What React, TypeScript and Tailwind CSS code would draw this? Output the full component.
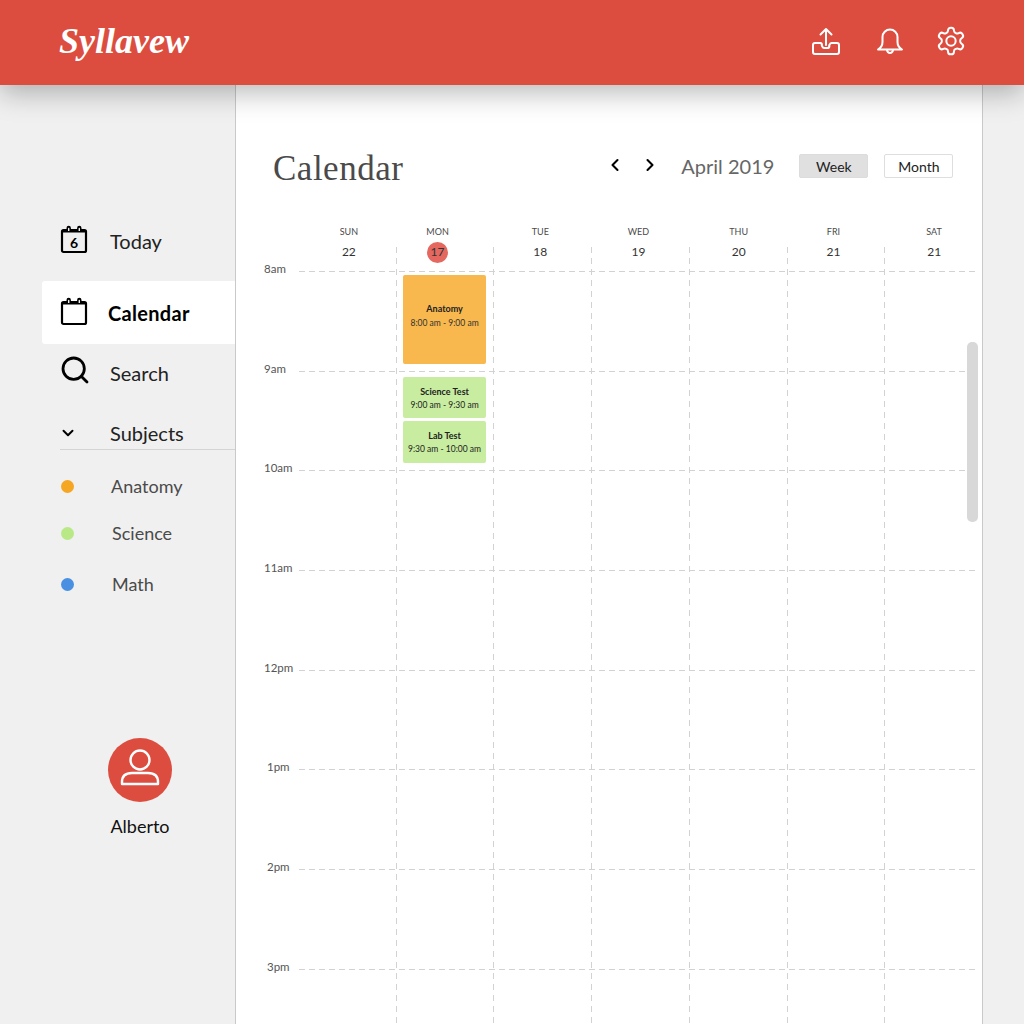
import React from 'react';
import { ChevronDown, ChevronLeft, ChevronRight, Search } from 'lucide-react';

const days = [
  { name: 'SUN', date: '22', cls: 'pl-[4px]' },
  { name: 'MON', date: '17', cls: 'pr-[14px]' },
  { name: 'TUE', date: '18', cls: 'pr-[4px]' },
  { name: 'WED', date: '19', cls: 'pr-[3px]' },
  { name: 'THU', date: '20', cls: 'pl-[2px]' },
  { name: 'FRI', date: '21', cls: 'pr-[4px]' },
  { name: 'SAT', date: '21', cls: 'pl-[2px]' },
];

const hours = [
  { label: '8am', cls: 'pl-[28px]' },
  { label: '9am', cls: 'pl-[28px]' },
  { label: '10am', cls: 'pl-[28px]' },
  { label: '11am', cls: 'pl-[28px]' },
  { label: '12pm', cls: 'pl-[28px]' },
  { label: '1pm', cls: 'pl-[31px]' },
  { label: '2pm', cls: 'pl-[31px]' },
  { label: '3pm', cls: 'pl-[31px]' },
];

const subjects = [
  { name: 'Anatomy', dot: 'bg-[#f5a623]', cls: 'h-[47px] pl-[44px]' },
  { name: 'Science', dot: 'bg-[#b8e986]', cls: 'h-[47px] pl-[45px]' },
  { name: 'Math', dot: 'bg-[#4a90e2]', cls: 'h-[55px] pl-[45px]' },
];

const CalendarIcon: React.FC<{ day?: string; className?: string }> = ({ day, className }) => (
  <svg width="28" height="30" viewBox="0 0 28 30" fill="none" className={className}>
    <rect x="2" y="6" width="24" height="22" rx="1.5" stroke="#000" strokeWidth="2.2" />
    <path d="M2 6h24v2.500H2Z" fill="#000" />
    <path d="M6.500 7V4a2.200 2.200 0 0 1 4.400 0v3ZM17.100 7V4a2.200 2.200 0 0 1 4.400 0v3Z" fill="#000" />
    <path d="M8 7V4.500a.7.7 0 0 1 1.400 0V7ZM18.600 7V4.500a.7.7 0 0 1 1.400 0V7Z" fill="#f0f0f0" />
    {day && (
      <text x="14" y="23.5" textAnchor="middle" fontSize="14" fontWeight="700" fill="#000" fontFamily="Lato, sans-serif">
        {day}
      </text>
    )}
  </svg>
);

const UploadIcon = () => (
  <svg width="30" height="30" viewBox="0 0 30 30" fill="none" stroke="#fff" strokeWidth="2" strokeLinecap="round" strokeLinejoin="round">
    <path d="M15 19V3M9.500 8.500 15 3l5.500 5.500" />
    <path d="M9.500 17H4a2 2 0 0 0-2 2v7a2 2 0 0 0 2 2h22a2 2 0 0 0 2-2v-7a2 2 0 0 0-2-2h-5.500a2 2 0 0 0-1.800 1.500l-.5 1A2 2 0 0 1 17 22h-4a2 2 0 0 1-1.700-1.500l-.5-1A2 2 0 0 0 9.500 17Z" />
  </svg>
);

const BellIcon = () => (
  <svg width="28" height="28" viewBox="0 0 28 28" fill="none" stroke="#fff" strokeWidth="2" strokeLinecap="round" strokeLinejoin="round">
    <path d="M2 22.500c2.500-1.500 4.500-3.500 4.500-7.500V10a7.500 7.500 0 0 1 15 0v5c0 4 2 6 4.500 7.500Z" />
    <path d="M11 23c.4 2 1.500 3 3 3s2.600-1 3-3" />
  </svg>
);

const GearIcon = () => (
  <svg width="32" height="32" viewBox="0 0 24 24" fill="none" stroke="#fff" strokeWidth="1.500" strokeLinecap="round" strokeLinejoin="round">
    <path d="M12.220 2h-.440a2 2 0 0 0-2 2v.180a2 2 0 0 1-1 1.730l-.430.250a2 2 0 0 1-2 0l-.150-.080a2 2 0 0 0-2.730.730l-.220.380a2 2 0 0 0 .730 2.730l.150.100a2 2 0 0 1 1 1.720v.510a2 2 0 0 1-1 1.740l-.150.090a2 2 0 0 0-.730 2.730l.220.380a2 2 0 0 0 2.730.730l.150-.080a2 2 0 0 1 2 0l.430.250a2 2 0 0 1 1 1.730V20a2 2 0 0 0 2 2h.440a2 2 0 0 0 2-2v-.180a2 2 0 0 1 1-1.730l.430-.250a2 2 0 0 1 2 0l.150.080a2 2 0 0 0 2.730-.730l.220-.390a2 2 0 0 0-.730-2.730l-.150-.080a2 2 0 0 1-1-1.740v-.500a2 2 0 0 1 1-1.740l.150-.090a2 2 0 0 0 .730-2.730l-.220-.380a2 2 0 0 0-2.730-.730l-.150.080a2 2 0 0 1-2 0l-.430-.250a2 2 0 0 1-1-1.730V4a2 2 0 0 0-2-2z" />
    <circle cx="12" cy="12" r="3.500" />
  </svg>
);

const PersonIcon = () => (
  <svg width="40" height="44" viewBox="0 0 40 44" fill="none" stroke="#fff" strokeWidth="2.400">
    <circle cx="20" cy="12" r="9.500" />
    <path d="M2 34c0-6 4-9 10-9h16c6 0 10 3 10 9v2H2Z" strokeLinejoin="round" />
  </svg>
);

const Sidebar = () => (
  <aside className="w-[235px] shrink-0 pt-[127px] text-[#4a4a4a]">
    <div className="h-[60px] pl-[60px] flex items-center gap-[22px] text-[20px] text-[#222]">
      <CalendarIcon day="6" className="-mt-[7px]" />
      <span className="-mt-[2px]">Today</span>
    </div>
    <div className="mt-[9px] ml-[42px] h-[63px] pl-[18px] bg-white rounded-l-[3px] flex items-center gap-[20px] text-[20px] tracking-[0.3px] font-bold text-black">
      <CalendarIcon className="-mt-[4px]" />
      <span>Calendar</span>
    </div>
    <div className="h-[60px] pl-[59px] flex items-center gap-[19px] text-[20px] text-[#222]">
      <Search size={32} color="#000" strokeWidth={2.1} className="-mt-[9px]" />
      <span className="-mt-[2px]">Search</span>
    </div>
    <div className="ml-[60px] h-[46px] pt-[12px] border-b border-[#d4d4d4] flex items-center text-[20px] text-[#222]">
      <ChevronDown size={18} color="#000" strokeWidth={2.6} className="-ml-[1px]" />
      <span className="ml-[33px]">Subjects</span>
    </div>
    <div className="ml-[60px] mt-[13px]">
      {subjects.map((s) => (
        <div key={s.name} className={`flex items-center text-[18px] relative ${s.cls}`}>
          <span className={`absolute left-[1px] w-[13px] h-[13px] rounded-full ${s.dot}`} />
          <span className="ml-[7px]">{s.name}</span>
        </div>
      ))}
    </div>
    <div className="mt-[126px] flex flex-col items-center pl-[45px]">
      <div className="w-[64px] h-[64px] rounded-full bg-[#dc4d3f] flex items-center justify-center">
        <PersonIcon />
      </div>
      <span className="mt-[11px] text-[18px] text-[#111]">Alberto</span>
    </div>
  </aside>
);

const CalendarPanel = () => (
  <main className="w-[748px] shrink-0 h-[939px] overflow-hidden bg-white border-x border-[#c9c9c9] relative">
    <div className="flex items-center h-[58px] mt-[54px] pl-[37px]">
      <h1 className="text-[35px] pt-[2px] text-[#4a4a4a] tracking-[0.5px] [font-family:'Liberation_Serif',serif]">Calendar</h1>
      <div className="ml-[202px] flex items-center gap-[15px] -mt-[7px]">
        <ChevronLeft size={20} color="#000" strokeWidth={2.5} />
        <ChevronRight size={20} color="#000" strokeWidth={2.5} />
      </div>
      <span className="ml-[21px] text-[20px] text-[#666] -mt-[4px]">April 2019</span>
      <div className="ml-[25px] flex gap-[16px] text-[14px] text-[#222] -mt-[4px]">
        <button type="button" className="w-[69px] h-[24px] bg-[#e0e0e0] border border-[#dcdcdc] rounded-[2px]">Week</button>
        <button type="button" className="w-[69px] h-[24px] bg-white border border-[#dedede] rounded-[2px]">Month</button>
      </div>
    </div>

    <div className="ml-[62px] mt-[29px] grid grid-cols-7 h-[12px]">
      {days.map((d) => (
        <div key={d.name} className={`text-center text-[9px] leading-[12px] text-[#4a4a4a] ${d.cls}`}>{d.name}</div>
      ))}
    </div>

    <div className="relative mt-[9px]">
      <div className="ml-[62px] grid grid-cols-7 h-[24px]">
        {days.map((d) => (
          <div key={d.name} className={`flex justify-center items-center text-[12px] text-[#333] -mt-[14px] ${d.cls}`}>
            {d.date === '17' ? (
              <span className="w-[21px] h-[21px] rounded-full bg-[#e4685f] flex items-center justify-center">17</span>
            ) : d.date}
          </div>
        ))}
      </div>

      {hours.map((h) => (
        <div key={h.label} className="flex h-[99.7px]">
          <div className={`w-[63px] -mt-[10px] text-[11.5px] leading-[16px] text-[#555] ${h.cls}`}>{h.label}</div>
          <div className="flex-1 mr-[4px] h-px bg-[repeating-linear-gradient(90deg,#d2d2d2_0_6px,transparent_6px_10px)]" />
        </div>
      ))}

      <div className="absolute top-0 left-[62px] right-0 grid grid-cols-7 h-[800px]">
        {days.map((d, i) => (
          <div
            key={d.name}
            className={i === 0 ? '' : 'bg-[repeating-linear-gradient(180deg,#d2d2d2_0_6px,transparent_6px_11px)] bg-[length:1px_100%] bg-no-repeat'}
          >
            {d.name === 'MON' && (
              <div className="pt-[28px] px-[7px] flex flex-col text-center text-[8.5px] text-[#333]">
                <div className="h-[89px] pb-[7px] rounded-[2px] bg-[#f8b84e] flex flex-col justify-center gap-[4px]">
                  <strong className="text-[9px] text-[#222] leading-[11px]">Anatomy</strong>
                  <span className="leading-[11px]">8:00 am - 9:00 am</span>
                </div>
                <div className="mt-[13px] h-[41px] pt-[1px] rounded-[2px] bg-[#c8eca0] flex flex-col justify-center gap-[3px] text-[#222]">
                  <strong className="text-[9px] leading-[11px]">Science Test</strong>
                  <span className="leading-[11px]">9:00 am - 9:30 am</span>
                </div>
                <div className="mt-[3px] h-[42px] rounded-[2px] bg-[#c8eca0] flex flex-col justify-center gap-[3px] text-[#222]">
                  <strong className="text-[9px] leading-[11px]">Lab Test</strong>
                  <span className="leading-[11px] whitespace-nowrap">9:30 am - 10:00 am</span>
                </div>
              </div>
            )}
          </div>
        ))}
      </div>
    </div>

    <div className="absolute top-[257px] right-[4px] w-[11px] h-[180px] rounded-[5px] bg-[#d8d8d8]" />
  </main>
);

export default function App() {
  return (
    <div className="w-[1024px] h-[1024px] overflow-hidden bg-[#f0f0f0] [font-family:Lato,sans-serif]">
      <header className="relative z-10 h-[85px] bg-[#dc4d3f] shadow-[0_8px_26px_rgba(0,0,0,0.28)] flex items-center pl-[59px]">
        <span className="text-[36px] font-bold italic text-white [font-family:'Liberation_Serif',serif] -mt-[3px]">Syllavew</span>
        <div className="ml-auto flex items-center pr-[57px] -mt-[3px]">
          <UploadIcon />
          <span className="ml-[35px]"><BellIcon /></span>
          <span className="ml-[31px]"><GearIcon /></span>
        </div>
      </header>
      <div className="flex">
        <Sidebar />
        <CalendarPanel />
      </div>
    </div>
  );
}
